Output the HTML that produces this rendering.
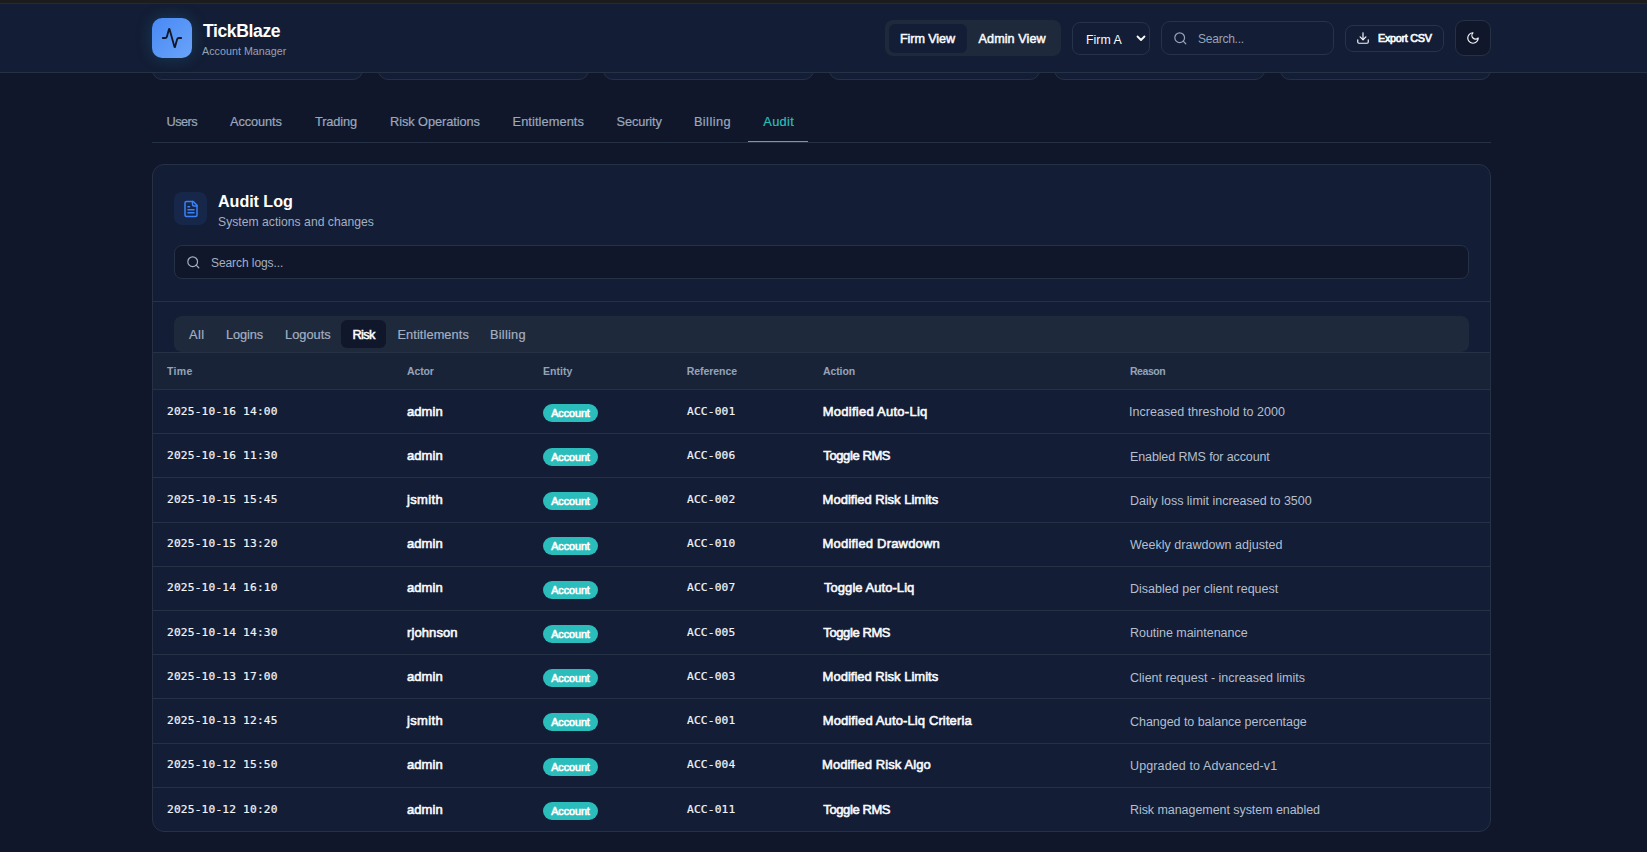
<!DOCTYPE html>
<html lang="en">
<head>
<meta charset="utf-8">
<title>TickBlaze Account Manager</title>
<style>
*{box-sizing:border-box;margin:0;padding:0}
html,body{width:1647px;height:852px;overflow:hidden}
body{background:#11172a;color:#f8fafc;font-family:"Liberation Sans",sans-serif;font-size:13px;position:relative}
.mono{font-family:"DejaVu Sans Mono","Liberation Mono",monospace}
.strip{position:absolute;left:0;top:0;width:1647px;height:4px;background:#1c1c1c;border-bottom:1px solid #2a2a25;z-index:30}
header{position:absolute;left:0;top:4px;width:1647px;height:69px;background:#131d35;border-bottom:1px solid #253145;z-index:20}
header *{position:absolute;white-space:nowrap}
.logo{left:152px;top:14px;width:39.5px;height:40px;border-radius:10px;background:linear-gradient(135deg,#4889f5,#6aa3f8);box-shadow:0 0 16px rgba(45,160,200,.25)}
.logo svg{left:8.7px;top:9px}
.brand{left:203px;top:17px;font-size:17.2px;font-weight:700;line-height:20px;color:#fff}
.sub{left:202px;top:40px;font-size:10.7px;line-height:14px;color:#94a3b8}
.toggle{left:885px;top:16px;width:176px;height:36px;border-radius:8px;background:#1e293b}
.toggle .on{left:4px;top:4px;width:78px;height:29.3px;border-radius:6px;background:#131d35}
.toggle span{top:5px;height:28px;line-height:28px;font-size:12.8px;font-weight:400;-webkit-text-stroke:.5px #f8fafc;color:#f8fafc}
.toggle .t1{left:15px}
.toggle .t2{left:93px}
.select{left:1072px;top:18px;width:78px;height:33px;border-radius:8px;border:1px solid #27324b;background:#131d35}
.select span{left:13px;top:1.7px;line-height:31px;font-size:12.5px;color:#f8fafc}
.select svg{left:62px;top:9px}
.search{left:1161px;top:17px;width:173px;height:34px;border-radius:9px;border:1px solid #27324b;background:#131d35}
.search svg{left:10.5px;top:8.7px}
.search span{left:36px;top:1px;line-height:32px;font-size:12px;color:#94a3b8}
.export{left:1345px;top:21px;width:99px;height:27px;border-radius:8px;border:1px solid #27324b;background:#131d35}
.export svg{left:10px;top:4.5px}
.export span{left:32px;top:0;line-height:25px;font-size:11px;font-weight:400;-webkit-text-stroke:.7px #f8fafc;color:#f8fafc}
.moon{left:1455px;top:16px;width:36px;height:36px;border-radius:9px;border:1px solid #253145;background:#11172a}
.moon svg{left:10px;top:10px}

main{position:absolute;left:152px;top:0;width:1339px;height:852px}
.peek{position:absolute;top:60px;height:20px;width:210.97px;border:1px solid #253145;border-radius:13px;background:#131d35}
nav{position:absolute;left:0;top:100px;width:1339px;height:43px;border-bottom:1px solid #253145}
nav a{position:absolute;top:0;height:42px;line-height:44px;font-size:12.2px;color:#9aa7bd;-webkit-text-stroke:.2px;white-space:nowrap;text-decoration:none}
nav a.act{color:#2bbfba}
nav .ul{position:absolute;left:596px;top:41px;width:60px;height:1.3px;background:#29bcbc}

.card{position:absolute;left:0;top:164px;width:1339px;height:668px;border:1px solid #253145;border-radius:12px;background:#131d35;overflow:hidden}
.card .abs{position:absolute;white-space:nowrap}
.ibox{left:21px;top:27px;width:33px;height:33px;border-radius:8px;background:#17274a}
.ibox svg{position:absolute;left:7.5px;top:7.5px}
.ctitle{left:65px;top:26px;font-size:15.5px;font-weight:700;line-height:20px;color:#fff}
.csub{left:65px;top:49px;font-size:11.7px;line-height:16px;color:#a3afc2}
.logsearch{left:21px;top:80px;width:1295px;height:34px;border-radius:8px;border:1px solid #253145;background:#11172a}
.logsearch svg{position:absolute;left:10.5px;top:8.7px}
.logsearch span{position:absolute;left:36px;top:1px;line-height:32px;font-size:12px;color:#a3afc2}
.divider{left:0;top:136px;width:1337px;height:1px;background:#253145}
.tablist{left:21px;top:151px;width:1295px;height:36px;border-radius:8px;background:#1e293b}
.tablist span{position:absolute;top:4px;height:28px;line-height:29.5px;font-size:12.2px;color:#a3afc2;-webkit-text-stroke:.2px;white-space:nowrap}
.tablist .on{left:167px;width:45px;border-radius:6px;background:#11172a}
.tablist span.sel{color:#fff;-webkit-text-stroke:.5px #fff}
table{position:absolute;left:0;top:187px;width:1337px;border-collapse:collapse;table-layout:fixed}
thead tr{height:37px;background:#192338}
th{border-top:1px solid #253145;border-bottom:1px solid #253145;text-align:left;font-size:10.5px;font-weight:700;color:#94a3b8;padding-left:14px}
td{height:44.2px;border-bottom:1px solid #253145;padding-left:14px;padding-top:1px;font-size:12px;white-space:nowrap;vertical-align:middle}
tbody tr:last-child td{border-bottom:none}
.c-time,.c-ref{font-size:11.2px;letter-spacing:.18px;-webkit-text-stroke:.2px #f1f5f9;color:#f1f5f9}
.c-actor,.c-action{font-weight:400;-webkit-text-stroke:.6px #f8fafc;color:#f8fafc}
.c-reason{color:#b4bfcf}
.badge{display:inline-block;position:relative;top:1px;height:18px;line-height:19px;width:55px;text-align:center;padding:0;border-radius:9px;background:#2bbcbc;color:#fff;font-size:11px;font-weight:400;-webkit-text-stroke:.65px #fff}
.c-ref{padding-left:15px}
.c-time,.c-ref,.c-actor,.c-action{padding-top:0;padding-bottom:1px}
.c-reason{padding-top:1.8px}
#brand{font-size:17.6px;letter-spacing:-0.41px}
#sub{font-size:10.7px;letter-spacing:0.04px}
#t1{font-size:12.6px;letter-spacing:-0.09px}
#t2{font-size:12.6px;letter-spacing:0.08px;text-indent:0.6px}
#firm{font-size:12.33px;letter-spacing:0.02px}
#hs{font-size:12.1px;letter-spacing:-0.29px}
#exp{font-size:10.8px;letter-spacing:-0.27px}
#n1{font-size:12.8px;letter-spacing:-0.55px}
#n2{font-size:12.8px;letter-spacing:-0.1px}
#n3{font-size:12.8px;letter-spacing:-0.12px}
#n4{font-size:12.8px;letter-spacing:-0.08px}
#n5{font-size:12.8px;letter-spacing:0.09px}
#n6{font-size:12.8px;letter-spacing:-0.13px}
#n7{font-size:12.8px;letter-spacing:0.42px;text-indent:-0.6px}
#n8{font-size:12.8px;letter-spacing:0.32px;text-indent:0.8px}
#ctitle{font-size:16.15px;letter-spacing:-0.06px}
#csub{font-size:12.17px;letter-spacing:0.02px}
#ls{font-size:12.0px;letter-spacing:-0.08px}
#f1{font-size:12.8px;letter-spacing:0.4px}
#f2{font-size:12.8px;letter-spacing:-0.12px}
#f3{font-size:12.8px;letter-spacing:0.02px}
#f4{font-size:12.8px;letter-spacing:-0.67px}
#f5{font-size:12.8px;letter-spacing:0.08px}
#f6{font-size:12.8px;letter-spacing:0.23px}
#h1{font-size:10.5px;letter-spacing:0.33px}
#h2{font-size:10.5px;letter-spacing:-0.12px}
#h3{font-size:10.5px;letter-spacing:0.04px}
#h4{font-size:10.5px;letter-spacing:-0.05px;text-indent:0.7px}
#h5{font-size:10.5px;letter-spacing:-0.08px;text-indent:0.9px}
#h6{font-size:10.5px;letter-spacing:-0.46px}
tbody tr:nth-child(1) .c-reason{font-size:12.5px;letter-spacing:0.04px;text-indent:-1.0px}
tbody tr:nth-child(1) .c-action{font-size:13px;letter-spacing:0.26px;text-indent:0.7px}
tbody tr:nth-child(1) .c-actor{font-size:13px;letter-spacing:0.05px}
tbody tr:nth-child(2) .c-reason{font-size:12.5px;letter-spacing:-0.12px}
tbody tr:nth-child(2) .c-action{font-size:13px;letter-spacing:-0.4px;text-indent:1.3px}
tbody tr:nth-child(2) .c-actor{font-size:13px;letter-spacing:0.05px}
tbody tr:nth-child(3) .c-reason{font-size:12.5px;letter-spacing:-0.01px}
tbody tr:nth-child(3) .c-action{font-size:13px;letter-spacing:0.0px;text-indent:0.6px}
tbody tr:nth-child(3) .c-actor{font-size:13px;letter-spacing:0.34px}
tbody tr:nth-child(4) .c-reason{font-size:12.5px;letter-spacing:0.02px}
tbody tr:nth-child(4) .c-action{font-size:13px;letter-spacing:0.19px;text-indent:0.6px}
tbody tr:nth-child(4) .c-actor{font-size:13px;letter-spacing:0.05px}
tbody tr:nth-child(5) .c-reason{font-size:12.5px;letter-spacing:0.01px}
tbody tr:nth-child(5) .c-action{font-size:13px;letter-spacing:0.05px;text-indent:2.0px}
tbody tr:nth-child(5) .c-actor{font-size:13px;letter-spacing:0.05px}
tbody tr:nth-child(6) .c-reason{font-size:12.5px;letter-spacing:-0.03px}
tbody tr:nth-child(6) .c-action{font-size:13px;letter-spacing:-0.4px;text-indent:1.3px}
tbody tr:nth-child(6) .c-actor{font-size:13px;letter-spacing:0.1px}
tbody tr:nth-child(7) .c-reason{font-size:12.5px;letter-spacing:0.02px}
tbody tr:nth-child(7) .c-action{font-size:13px;letter-spacing:0.0px;text-indent:0.6px}
tbody tr:nth-child(7) .c-actor{font-size:13px;letter-spacing:0.05px}
tbody tr:nth-child(8) .c-reason{font-size:12.5px;letter-spacing:-0.04px}
tbody tr:nth-child(8) .c-action{font-size:13px;letter-spacing:0.12px;text-indent:0.7px}
tbody tr:nth-child(8) .c-actor{font-size:13px;letter-spacing:0.34px}
tbody tr:nth-child(9) .c-reason{font-size:12.5px;letter-spacing:0.12px}
tbody tr:nth-child(9) .c-action{font-size:13px;letter-spacing:0.11px}
tbody tr:nth-child(9) .c-actor{font-size:13px;letter-spacing:0.05px}
tbody tr:nth-child(10) .c-reason{font-size:12.5px;letter-spacing:-0.06px}
tbody tr:nth-child(10) .c-action{font-size:13px;letter-spacing:-0.4px;text-indent:1.3px}
tbody tr:nth-child(10) .c-actor{font-size:13px;letter-spacing:0.05px}
.badge{font-size:10.7px;letter-spacing:0.0px}
</style>
</head>
<body>
<div class="strip"></div>
<header>
  <div class="logo"><svg width="22" height="22" viewBox="0 0 24 24" fill="none" stroke="#111827" stroke-width="2" stroke-linecap="round" stroke-linejoin="round"><path d="M22 12h-2.48a2 2 0 0 0-1.93 1.46l-2.35 8.36a.25.25 0 0 1-.48 0L9.24 2.18a.25.25 0 0 0-.48 0l-2.35 8.36A2 2 0 0 1 4.49 12H2"/></svg></div>
  <div class="brand" id="brand">TickBlaze</div>
  <div class="sub" id="sub">Account Manager</div>
  <div class="toggle"><div class="on"></div><span class="t1" id="t1">Firm View</span><span class="t2" id="t2">Admin View</span></div>
  <div class="select"><span id="firm">Firm A</span><svg width="12" height="12" viewBox="0 0 12 12" fill="none" stroke="#f8fafc" stroke-width="1.8" stroke-linecap="round" stroke-linejoin="round"><path d="M2.5 4.5 6 8l3.5-3.5"/></svg></div>
  <div class="search"><svg width="14.6" height="14.6" viewBox="0 0 24 24" fill="none" stroke="#94a3b8" stroke-width="2" stroke-linecap="round" stroke-linejoin="round"><circle cx="11" cy="11" r="8"/><path d="m21 21-4.3-4.3"/></svg><span id="hs">Search...</span></div>
  <div class="export"><svg width="14" height="14" viewBox="0 0 24 24" fill="none" stroke="#f8fafc" stroke-width="2" stroke-linecap="round" stroke-linejoin="round"><path d="M21 15v4a2 2 0 0 1-2 2H5a2 2 0 0 1-2-2v-4"/><path d="m7 10 5 5 5-5"/><path d="M12 15V3"/></svg><span id="exp">Export CSV</span></div>
  <div class="moon"><svg width="14" height="14" viewBox="0 0 24 24" fill="none" stroke="#f8fafc" stroke-width="2" stroke-linecap="round" stroke-linejoin="round"><path d="M12 3a6 6 0 0 0 9 9 9 9 0 1 1-9-9Z"/></svg></div>
</header>
<main>
  <div class="peek" style="left:0.0px"></div>
  <div class="peek" style="left:225.6px"></div>
  <div class="peek" style="left:451.2px"></div>
  <div class="peek" style="left:676.8px"></div>
  <div class="peek" style="left:902.4px"></div>
  <div class="peek" style="left:1128.0px"></div>
  <nav>
    <a id="n1" style="left:14.5px">Users</a>
    <a id="n2" style="left:78px">Accounts</a>
    <a id="n3" style="left:163px">Trading</a>
    <a id="n4" style="left:238px">Risk Operations</a>
    <a id="n5" style="left:360.5px">Entitlements</a>
    <a id="n6" style="left:464.5px">Security</a>
    <a id="n7" style="left:542.5px">Billing</a>
    <a id="n8" class="act" style="left:610.5px">Audit</a>
    <div class="ul"></div>
  </nav>
  <section class="card">
    <div class="abs ibox"><svg width="18" height="18" viewBox="0 0 24 24" fill="none" stroke="#3b82f6" stroke-width="2" stroke-linecap="round" stroke-linejoin="round"><path d="M15 2H6a2 2 0 0 0-2 2v16a2 2 0 0 0 2 2h12a2 2 0 0 0 2-2V7Z"/><path d="M14 2v4a2 2 0 0 0 2 2h4"/><path d="M10 9H8"/><path d="M16 13H8"/><path d="M16 17H8"/></svg></div>
    <h2 class="abs ctitle" id="ctitle">Audit Log</h2>
    <p class="abs csub" id="csub">System actions and changes</p>
    <div class="abs logsearch"><svg width="14.6" height="14.6" viewBox="0 0 24 24" fill="none" stroke="#a3afc2" stroke-width="2" stroke-linecap="round" stroke-linejoin="round"><circle cx="11" cy="11" r="8"/><path d="m21 21-4.3-4.3"/></svg><span id="ls">Search logs...</span></div>
    <div class="abs divider"></div>
    <div class="abs tablist">
      <span class="on"></span>
      <span id="f1" style="left:15px">All</span>
      <span id="f2" style="left:52px">Logins</span>
      <span id="f3" style="left:111px">Logouts</span>
      <span id="f4" class="sel" style="left:178.5px">Risk</span>
      <span id="f5" style="left:223.5px">Entitlements</span>
      <span id="f6" style="left:316px">Billing</span>
    </div>
    <table>
      <colgroup><col style="width:240px"><col style="width:136px"><col style="width:143px"><col style="width:136px"><col style="width:308px"><col></colgroup>
      <thead><tr><th id="h1">Time</th><th id="h2">Actor</th><th id="h3">Entity</th><th id="h4">Reference</th><th id="h5">Action</th><th id="h6">Reason</th></tr></thead>
      <tbody>
      <tr>
        <td class="c-time mono">2025-10-16 14:00</td>
        <td class="c-actor">admin</td>
        <td class="c-entity"><span class="badge">Account</span></td>
        <td class="c-ref mono">ACC-001</td>
        <td class="c-action">Modified Auto-Liq</td>
        <td class="c-reason">Increased threshold to 2000</td>
      </tr>
      <tr>
        <td class="c-time mono">2025-10-16 11:30</td>
        <td class="c-actor">admin</td>
        <td class="c-entity"><span class="badge">Account</span></td>
        <td class="c-ref mono">ACC-006</td>
        <td class="c-action">Toggle RMS</td>
        <td class="c-reason">Enabled RMS for account</td>
      </tr>
      <tr>
        <td class="c-time mono">2025-10-15 15:45</td>
        <td class="c-actor">jsmith</td>
        <td class="c-entity"><span class="badge">Account</span></td>
        <td class="c-ref mono">ACC-002</td>
        <td class="c-action">Modified Risk Limits</td>
        <td class="c-reason">Daily loss limit increased to 3500</td>
      </tr>
      <tr>
        <td class="c-time mono">2025-10-15 13:20</td>
        <td class="c-actor">admin</td>
        <td class="c-entity"><span class="badge">Account</span></td>
        <td class="c-ref mono">ACC-010</td>
        <td class="c-action">Modified Drawdown</td>
        <td class="c-reason">Weekly drawdown adjusted</td>
      </tr>
      <tr>
        <td class="c-time mono">2025-10-14 16:10</td>
        <td class="c-actor">admin</td>
        <td class="c-entity"><span class="badge">Account</span></td>
        <td class="c-ref mono">ACC-007</td>
        <td class="c-action">Toggle Auto-Liq</td>
        <td class="c-reason">Disabled per client request</td>
      </tr>
      <tr>
        <td class="c-time mono">2025-10-14 14:30</td>
        <td class="c-actor">rjohnson</td>
        <td class="c-entity"><span class="badge">Account</span></td>
        <td class="c-ref mono">ACC-005</td>
        <td class="c-action">Toggle RMS</td>
        <td class="c-reason">Routine maintenance</td>
      </tr>
      <tr>
        <td class="c-time mono">2025-10-13 17:00</td>
        <td class="c-actor">admin</td>
        <td class="c-entity"><span class="badge">Account</span></td>
        <td class="c-ref mono">ACC-003</td>
        <td class="c-action">Modified Risk Limits</td>
        <td class="c-reason">Client request - increased limits</td>
      </tr>
      <tr>
        <td class="c-time mono">2025-10-13 12:45</td>
        <td class="c-actor">jsmith</td>
        <td class="c-entity"><span class="badge">Account</span></td>
        <td class="c-ref mono">ACC-001</td>
        <td class="c-action">Modified Auto-Liq Criteria</td>
        <td class="c-reason">Changed to balance percentage</td>
      </tr>
      <tr>
        <td class="c-time mono">2025-10-12 15:50</td>
        <td class="c-actor">admin</td>
        <td class="c-entity"><span class="badge">Account</span></td>
        <td class="c-ref mono">ACC-004</td>
        <td class="c-action">Modified Risk Algo</td>
        <td class="c-reason">Upgraded to Advanced-v1</td>
      </tr>
      <tr>
        <td class="c-time mono">2025-10-12 10:20</td>
        <td class="c-actor">admin</td>
        <td class="c-entity"><span class="badge">Account</span></td>
        <td class="c-ref mono">ACC-011</td>
        <td class="c-action">Toggle RMS</td>
        <td class="c-reason">Risk management system enabled</td>
      </tr>
      </tbody>
    </table>
  </section>
</main>
</body>
</html>
